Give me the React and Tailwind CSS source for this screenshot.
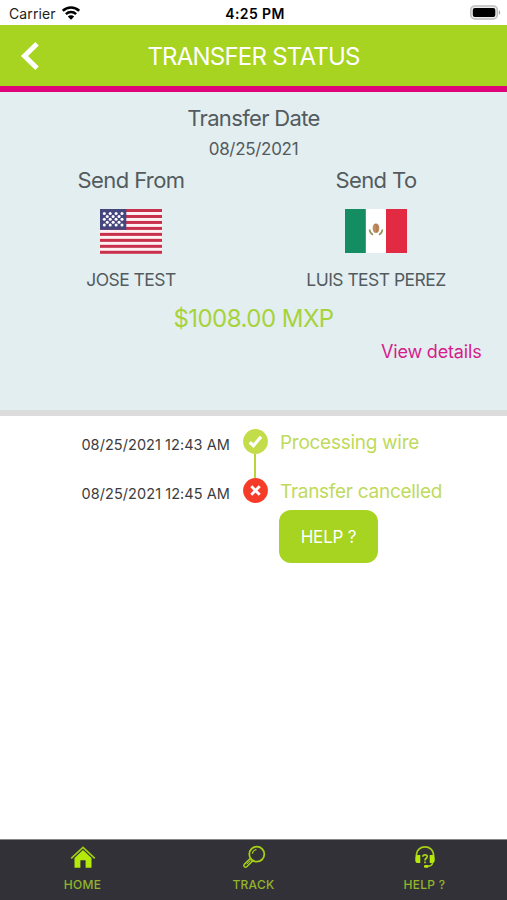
const STARS = [0, 1, 2, 3, 4].flatMap((row) =>
  (row % 2 === 0 ? [0, 1, 2, 3] : [0.5, 1.5, 2.5]).map((col) => ({
    x: 4.3 + col * 5.9,
    y: 5.1 + row * 2.9
  }))
);

const events = [
  { id: 1, date: '08/25/2021 12:43 AM', label: 'Processing wire', ok: true },
  { id: 2, date: '08/25/2021 12:45 AM', label: 'Transfer cancelled', ok: false }
];

function UsFlag() {
  return (
    <svg viewBox="0 0 62 45" className="h-[45px] w-[62px]">
      <rect width="62" height="45" fill="#fdf1f4" />
      {[0, 1, 2, 3, 4, 5, 6, 7].map((i) => (
        <rect key={i} y={i * 5.97} width="62" height="3" fill="#c9304c" />
      ))}
      <rect width="26.3" height="20.8" fill="#46467f" />
      {STARS.map((s) => (
        <circle key={`${s.x}-${s.y}`} cx={s.x} cy={s.y - 0.6} r="1.5" fill="#fff" />
      ))}
    </svg>
  );
}

function MxFlag() {
  return (
    <svg viewBox="0 0 62 44" className="h-[44px] w-[62px]">
      <rect width="62" height="44" fill="#fff" />
      <rect width="20.8" height="44" fill="#138d61" />
      <rect x="41" width="21" height="44" fill="#e32a43" />
      <ellipse cx="31" cy="19.3" rx="3.3" ry="4.8" fill="#c08a5c" />
      <path d="M30 15c2 1 3 4 1.5 8" fill="none" stroke="#a9744a" strokeWidth="1" />
      <path d="M24.6 20.5c.2 2.5 1.5 4.4 3.4 5.3M37.4 20.5c-.2 2.5-1.5 4.4-3.4 5.3" fill="none" stroke="#96955c" strokeWidth="1.7" />
    </svg>
  );
}

function StatusBar() {
  return (
    <div className="grid h-[25px] grid-cols-3 items-center bg-white pt-[1px] pr-[6px] pl-[9px] text-black">
      <div className="flex items-center gap-[6px]">
        <span className="text-[14px] tracking-[0.1px] text-[#222]">Carrier</span>
        <svg viewBox="0 0 18 14" className="-mt-[1px] h-[14px] w-[18px]">
          <path d="M.8 4.9a11.7 11.7 0 0 1 16.4 0" fill="none" stroke="#000" strokeWidth="2.6" />
          <path d="M3.9 8.1a7.3 7.3 0 0 1 10.2 0" fill="none" stroke="#000" strokeWidth="2.4" />
          <path d="M9 13.8 5.8 10.6a4.6 4.6 0 0 1 6.4 0Z" />
        </svg>
      </div>
      <p className="text-center text-[14px] font-semibold tracking-[0.4px] whitespace-nowrap">4:25 PM</p>
      <svg viewBox="0 0 31 15" className="-mt-[1px] h-[15px] w-[31px] justify-self-end">
        <rect x=".8" y=".9" width="26.5" height="13" rx="4" fill="#eee" stroke="#bdbdbd" strokeWidth="1.5" />
        <rect x="2.8" y="2.9" width="22.5" height="9" rx="2" />
        <path d="M28.8 5.2c1.9.6 1.9 4 0 4.6Z" fill="#aaa" />
      </svg>
    </div>
  );
}

function Party({ title, name, children }) {
  return (
    <div className="flex flex-col items-center">
      <h2 className="text-[22px] leading-[32px] tracking-[-0.6px]">{title}</h2>
      <div className="mt-[13px] h-[45px]">{children}</div>
      <p className="mt-[14px] text-[17.5px] leading-[24px] tracking-[-0.55px]">{name}</p>
    </div>
  );
}

function StatusDot({ ok }) {
  return (
    <svg viewBox="0 0 25 25" className="h-[25px] w-[25px]">
      <circle cx="12.5" cy="12.5" r="12.4" fill={ok ? '#c3dc49' : '#f63c28'} />
      {ok ? (
        <path d="m6.8 13.2 3.6 3.5 7.6-8.900" fill="none" stroke="#fff" strokeWidth="3.3" />
      ) : (
        <path d="m8.3 8.3 8.4 8.4m0-8.400-8.400 8.4" fill="none" stroke="#fff" strokeWidth="2.8" />
      )}
    </svg>
  );
}

function HomeIcon() {
  return (
    <svg viewBox="0 0 26 24" className="h-[24px] w-[26px]">
      <path d="M1.2 13.3 13 2.3l11.8 11" fill="none" stroke="#a0cc15" strokeWidth="1.7" />
      <path d="M13 4.9 4.5 12.9V22.8h5.9v-7.5h5.2v7.5h5.9v-9.900Z" fill="#b5e90c" />
    </svg>
  );
}

function TrackIcon() {
  return (
    <svg viewBox="0 0 24 24" className="h-[24px] w-[24px]" fill="none" stroke="#a6cf17" strokeWidth="1.5">
      <circle cx="14.8" cy="9.2" r="7.5" strokeWidth="1.8" />
      <path d="M10.4 8.7a4.5 4.5 0 0 1 4-4" strokeWidth="1.2" />
      <path d="m8.7 13.1-6.4 6.3c-1.5 1.5.8 4 2.4 2.4l6.4-6.4" />
      <path d="m8.6 15.3-3.8 3.9" strokeWidth="1" />
    </svg>
  );
}

function HelpIcon() {
  return (
    <svg viewBox="0 0 22 24" className="h-[24px] w-[22px]">
      <path d="M2.5 11V9.5a8.5 7.7 0 0 1 17 0V11" fill="none" stroke="#a6cf17" strokeWidth="1.8" />
      <path d="M6.3 10H4a2.7 2.7 0 0 0-2.7 2.7v2.5A2.7 2.7 0 0 0 4 18h2.3ZM15.7 10H18a2.7 2.7 0 0 1 2.7 2.7v2.5A2.7 2.7 0 0 1 18 18h-2.3Z" fill="#b5e90c" />
      <path d="M18.5 17.5c0 2.5-1.5 3.7-5 3.7" fill="none" stroke="#a6cf17" strokeWidth="1.5" />
      <rect x="10" y="20" width="4.5" height="2.8" rx="1.2" fill="#b5e90c" />
      <path d="M8.8 11.7c.2-2.6 4.5-2.5 4.4 0 0 1.5-2.2 1.7-2.2 3.7m0 1v1.9" fill="none" stroke="#a6cf17" strokeWidth="1.8" />
    </svg>
  );
}

const tabs = [
  { id: 'home', label: 'HOME', Icon: HomeIcon },
  { id: 'track', label: 'TRACK', Icon: TrackIcon },
  { id: 'help', label: 'HELP ?', Icon: HelpIcon }
];

export default function App() {
  return (
    <div className="flex h-[900px] w-[507px] flex-col overflow-hidden bg-white font-['Inter',sans-serif]">
      <StatusBar />
      <header className="grid h-[67px] grid-cols-[60px_1fr_60px] items-center border-b-[6px] border-[#e0047a] bg-[#a7d321] text-white">
        <button type="button" className="pl-[20px]" aria-label="Back">
          <svg viewBox="0 0 20 30" className="h-[30px] w-[20px]">
            <path d="M17 2.7 4.5 15 17 27.3" fill="none" stroke="#fff" strokeWidth="5" />
          </svg>
        </button>
        <h1 className="pt-[2px] text-center text-[24px] tracking-[-0.78px]">TRANSFER STATUS</h1>
      </header>

      <section className="h-[324px] border-b-[6px] border-[#dcdcdc] bg-[#e3eef1] px-[8.5px] pt-[10px] text-center text-[#535b5e]">
        <h2 className="text-[22px] leading-[32px] tracking-[-0.65px]">Transfer Date</h2>
        <p className="text-[17px] leading-[30px] tracking-[-0.3px]">08/25/2021</p>
        <div className="grid grid-cols-2">
          <Party title="Send From" name="JOSE TEST"><UsFlag /></Party>
          <Party title="Send To" name="LUIS TEST PEREZ"><MxFlag /></Party>
        </div>
        <p className="mt-[11px] text-[24px] leading-[32px] tracking-[-0.52px] text-[#a7d33a]">$1008.00 MXP</p>
        <div className="mt-[5px] pr-[17px] text-right">
          <button type="button" className="text-[18px] leading-[24px] tracking-[-0.17px] text-[#d81b8c]">View details</button>
        </div>
      </section>

      <main className="flex-1 pt-[13px]">
        {events.map((event, i) => (
          <div key={event.id} className="grid h-[49px] grid-cols-[230px_50px_1fr]">
            <p className="pt-[6px] text-right text-[14.5px] leading-[20px] tracking-[0.06px] whitespace-nowrap text-[#3c3c3c]">{event.date}</p>
            <div className="flex flex-col items-center">
              <StatusDot ok={event.ok} />
              {i < events.length - 1 && <div className="w-[2px] flex-1 bg-[#b9d53a]" />}
            </div>
            <p className="pt-[1px] text-[19px] leading-[25px] tracking-[-0.28px] text-[#c0da5c]">{event.label}</p>
          </div>
        ))}
        <button type="button" className="-mt-[17px] ml-[279px] block h-[53px] w-[99px] rounded-[12px] bg-[#a7d321] pt-[2px] text-[17px] tracking-[-0.2px] text-white">
          HELP ?
        </button>
      </main>

      <nav className="flex h-[61px] justify-center border-t border-[#85868a] bg-[#313137]">
        {tabs.map(({ id, label, Icon }) => (
          <button key={id} type="button" className="flex w-[171px] shrink-0 flex-col items-center pt-[5px] text-[12px] font-medium text-[#93b42c]">
            <Icon />
            <span className="mt-[7px] leading-[18px] tracking-[0.3px]">{label}</span>
          </button>
        ))}
      </nav>
    </div>
  );
}
